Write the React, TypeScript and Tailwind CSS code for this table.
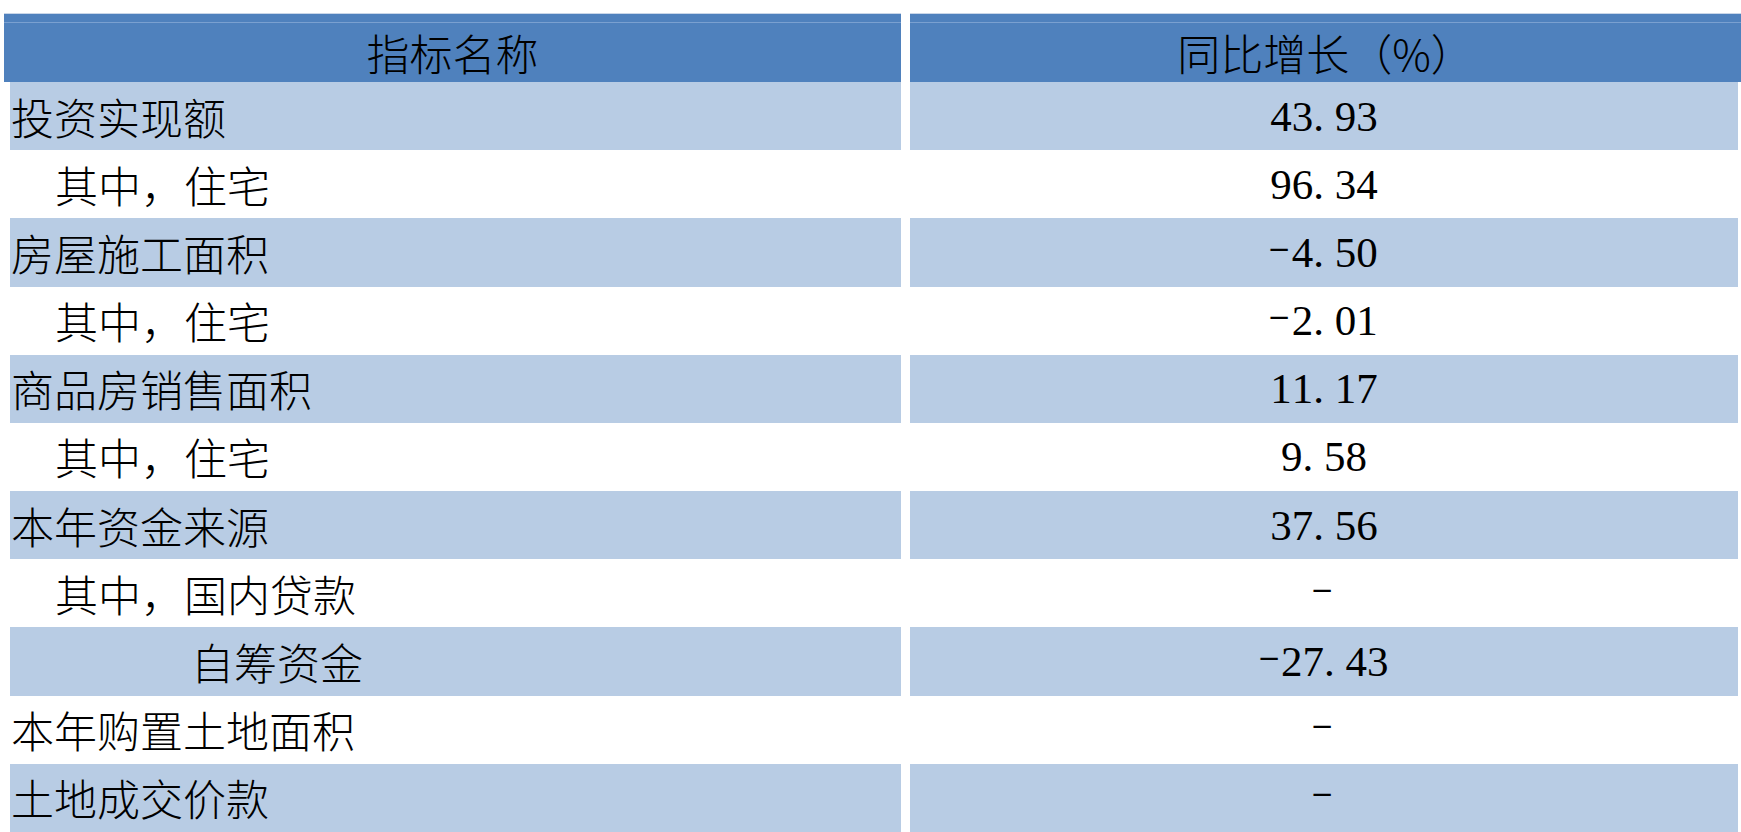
import React from 'react';

type Row = { name: string; indent: 0 | 1 | 2; value: string };

const rows: Row[] = [
  { name: '投资实现额', indent: 0, value: '43.93' },
  { name: '其中，住宅', indent: 1, value: '96.34' },
  { name: '房屋施工面积', indent: 0, value: '-4.50' },
  { name: '其中，住宅', indent: 1, value: '-2.01' },
  { name: '商品房销售面积', indent: 0, value: '11.17' },
  { name: '其中，住宅', indent: 1, value: '9.58' },
  { name: '本年资金来源', indent: 0, value: '37.56' },
  { name: '其中，国内贷款', indent: 1, value: '-' },
  { name: '自筹资金', indent: 2, value: '-27.43' },
  { name: '本年购置土地面积', indent: 0, value: '-' },
  { name: '土地成交价款', indent: 0, value: '-' },
];

function NumberText({ value }: { value: string }) {
  return (
    <span className="font-['Liberation_Serif',serif] text-[43px] leading-none text-black whitespace-nowrap">
      {value.split('').map((ch, i) =>
        ch === '-' ? (
          <span key={i} className="inline-block w-[21.5px] text-left">
            <span className="inline-block -ml-[2px] origin-left scale-x-[1.55] scale-y-[0.7] -translate-y-[6px]">-</span>
          </span>
        ) : (
          <span key={i} className="inline-block w-[21.5px] text-left">
            {ch}
          </span>
        )
      )}
    </span>
  );
}

export default function App() {
  return (
    <div className="w-[1741px] h-[832px] bg-white overflow-hidden font-['Noto_Sans_CJK_SC',sans-serif] font-light text-black">
      <div className="flex flex-col pt-[13px]">
        {/* header */}
        <div className="flex ml-[4px] h-[69px] gap-[9px]">
          <div className="w-[897px] flex flex-col bg-[#4f81bd] border-t border-[#c9d6e8]">
            <div className="h-[9px] border-b border-[#7aa0d0]" />
            <div className="flex-1 flex items-center justify-center text-[43px] leading-none">指标名称</div>
          </div>
          <div className="flex-1 flex flex-col bg-[#4f81bd] border-t border-[#c9d6e8]">
            <div className="h-[9px] border-b border-[#7aa0d0]" />
            <div className="flex-1 flex items-center justify-center text-[43px] leading-none">同比增长（%）</div>
          </div>
        </div>
        {/* body */}
        <div className="ml-[10px] mr-[3px] h-[750px] grid grid-cols-[891px_1fr] grid-rows-[repeat(11,1fr)] gap-x-[9px]">
          {rows.map((r, i) => {
            const bg = i % 2 === 0 ? 'bg-[#b8cce4]' : 'bg-white';
            const pad = r.indent === 0 ? 'pl-[1px]' : r.indent === 1 ? 'pl-[45px]' : 'pl-[181px]';
            return (
              <React.Fragment key={i}>
                <div className={`${bg} ${pad} flex items-center text-[43px] leading-none whitespace-nowrap`}>
                  {r.name}
                </div>
                <div className={`${bg} flex items-center justify-center`}>
                  <NumberText value={r.value} />
                </div>
              </React.Fragment>
            );
          })}
        </div>
      </div>
    </div>
  );
}
